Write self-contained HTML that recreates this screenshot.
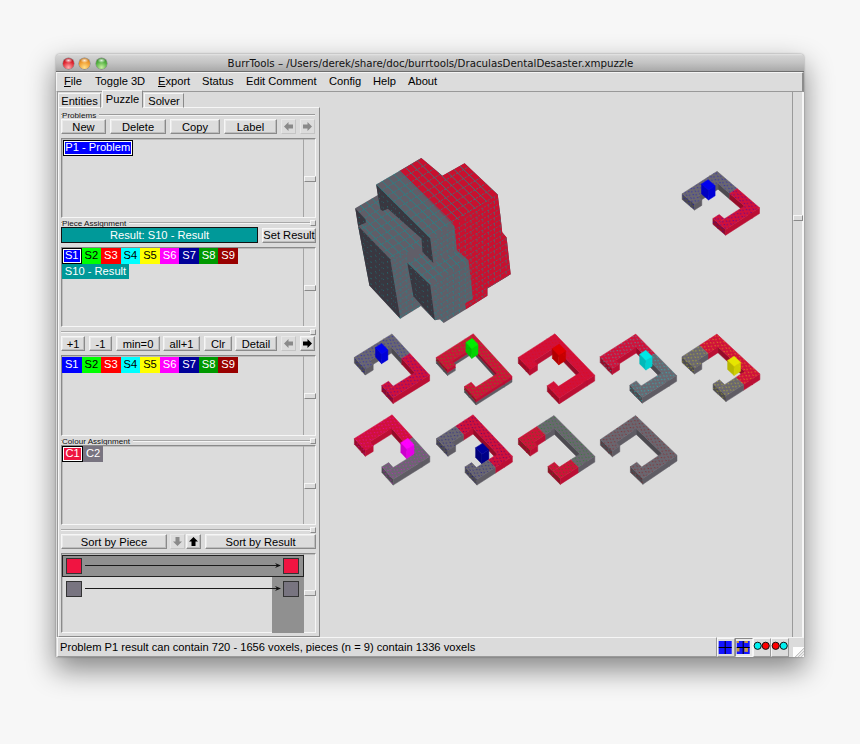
<!DOCTYPE html><html><head><meta charset="utf-8"><title>BurrTools</title><style>
html,body{margin:0;padding:0}
body{width:860px;height:744px;overflow:hidden;background:#f7f7f7;position:relative;font-family:"Liberation Sans",sans-serif;font-size:11.15px;color:#000}
.abs,#win *{position:absolute;box-sizing:border-box}
#win{position:absolute;left:56px;top:54px;width:748px;height:603px;background:#dbdbdb;border-radius:4px 4px 0 0;box-shadow:0 12px 28px 1px rgba(0,0,0,.45),0 0 2px rgba(0,0,0,.4)}
#title{left:0;top:0;width:748px;padding-left:1px;height:18px;border-radius:4px 4px 0 0;background:linear-gradient(#e6e6e6 0,#dadada 1px,#d2d2d2 2px,#c4c4c4 50%,#a9a9a9);border-bottom:1px solid #6e6e6e;font-family:"DejaVu Sans","Liberation Sans",sans-serif;font-size:10.25px;text-align:center;line-height:18px;color:#111;white-space:nowrap}
.tl{width:11px;height:11px;border-radius:50%;top:4px}
#menu{left:0;top:18px;width:748px;height:20px;background:#dcdcdc;border-top:1px solid #f4f4f4;border-left:1px solid #f4f4f4;border-bottom:1px solid #999;border-right:2px solid #8c8c8c}
#menu span{top:0;line-height:17px;white-space:nowrap}
#win u{position:static}
.t{white-space:nowrap;line-height:15px;text-align:center}
.btn{background:#dcdcdc;border:1px solid;border-color:#f6f6f6 #8a8a8a #8a8a8a #f6f6f6;box-shadow:inset -1px -1px 0 #bdbdbd,inset 1px 1px 0 #e9e9e9;text-align:center;white-space:nowrap;line-height:14px;height:15px}
.down{background:#dcdcdc;border:1px solid;border-color:#8a8a8a #f6f6f6 #f6f6f6 #8a8a8a;box-shadow:inset 1px 1px 0 #bdbdbd}
.lbl{font-size:8.1px;line-height:9px;white-space:nowrap;background:#dbdbdb;padding-right:3px;color:#111}
.it{height:15.5px;line-height:15.5px;text-align:center;white-space:nowrap}
.sep{height:2px;border-top:1px solid #a9a9a9;border-bottom:1px solid #f4f4f4}
.hd{width:6px;height:6px;background:#dcdcdc;border:1px solid;border-color:#f6f6f6 #8a8a8a #8a8a8a #f6f6f6}
.thumb{left:247px;width:12px;height:6px;background:#dcdcdc;border:1px solid;border-color:#f6f6f6 #8a8a8a #8a8a8a #f6f6f6}
.sq{width:16px;height:16px;border:1px solid #333}
</style></head><body><div id="win">
<div id="title">BurrTools – /Users/derek/share/doc/burrtools/DraculasDentalDesaster.xmpuzzle</div>
<div class="tl" style="left:6.8px;background:radial-gradient(ellipse 4px 2.5px at 50% 22%,rgba(255,255,255,.85),rgba(255,255,255,0) 100%),radial-gradient(circle at 50% 85%,#ffb0b0 0%,#e0232e 55%,#8e1219 100%);box-shadow:0 0 0 0.5px rgba(60,60,60,.5)"></div>
<div class="tl" style="left:23.2px;background:radial-gradient(ellipse 4px 2.5px at 50% 22%,rgba(255,255,255,.85),rgba(255,255,255,0) 100%),radial-gradient(circle at 50% 85%,#ffe08a 0%,#f09a2c 55%,#a0621a 100%);box-shadow:0 0 0 0.5px rgba(60,60,60,.5)"></div>
<div class="tl" style="left:39.6px;background:radial-gradient(ellipse 4px 2.5px at 50% 22%,rgba(255,255,255,.85),rgba(255,255,255,0) 100%),radial-gradient(circle at 50% 85%,#c8f0a0 0%,#52b040 55%,#2f6e26 100%);box-shadow:0 0 0 0.5px rgba(60,60,60,.5)"></div>
<div id="menu">
<span style="left:7px"><u>F</u>ile</span>
<span style="left:38px">Toggle 3D</span>
<span style="left:101px"><u>E</u>xport</span>
<span style="left:145px">Status</span>
<span style="left:189px">Edit Comment</span>
<span style="left:272px">Config</span>
<span style="left:316px">Help</span>
<span style="left:351px">About</span>
</div>
<div class="abs" style="left:1px;top:38px;width:2px;height:545px;background:#9a9a9a;width:1px"></div>
<div class="abs" style="left:2px;top:53px;width:262px;height:530px;border:1px solid;border-color:#f6f6f6 #8a8a8a #8a8a8a #f6f6f6"></div>
<div class="abs t" style="left:2px;top:39px;width:43px;height:15px;border:1px solid;border-color:#f6f6f6 #8a8a8a transparent #f6f6f6;line-height:14px">Entities</div>
<div class="abs t" style="left:46px;top:36px;width:41px;height:18px;border:1px solid;border-color:#f6f6f6 #8a8a8a #dbdbdb #f6f6f6;line-height:17px;background:#dbdbdb">Puzzle</div>
<div class="abs t" style="left:88px;top:39px;width:40px;height:15px;border:1px solid;border-color:#f6f6f6 #8a8a8a transparent #f6f6f6;line-height:14px">Solver</div>
<div class="abs" style="left:5px;top:60px;width:254px;height:2px;border-top:1px solid #9a9a9a;border-bottom:1px solid #f4f4f4"></div>
<div class="abs lbl" style="left:6px;top:57px">Problems</div>
<div class="btn" style="left:5px;top:65px;width:45px;">New</div>
<div class="btn" style="left:54px;top:65px;width:56px;">Delete</div>
<div class="btn" style="left:114px;top:65px;width:50px;">Copy</div>
<div class="btn" style="left:168px;top:65px;width:53px;">Label</div>
<div class="btn" style="left:225px;top:65px;width:15px;border-color:#e8e8e8 #c4c4c4 #c4c4c4 #e8e8e8;box-shadow:none"><svg width="11" height="11" viewBox="0 0 11 11" style="position:absolute;left:1px;top:1px"><path d="M1 5.5 L5.5 1 V3.5 H10 V7.5 H5.5 V10 Z" fill="#8a8a8a"/></svg></div>
<div class="btn" style="left:244px;top:65px;width:15px;border-color:#e8e8e8 #c4c4c4 #c4c4c4 #e8e8e8;box-shadow:none"><svg width="11" height="11" viewBox="0 0 11 11" style="position:absolute;left:1px;top:1px"><path d="M10 5.5 L5.5 1 V3.5 H1 V7.5 H5.5 V10 Z" fill="#8a8a8a"/></svg></div>
<div class="down" style="left:5px;top:84px;width:255px;height:80px">
<div class="abs" style="left:241px;top:0;width:1px;height:78px;background:#a4a4a4"></div>
<div class="thumb" style="left:242px;top:37px;width:12px"></div>
<div class="it" style="left:0.5px;top:1.2px;width:70.5px;background:#0000ff;color:#fff;border:1px solid #000;box-shadow:inset 0 0 0 1px #fff;line-height:13.5px">P1 - Problem</div>
</div>
<div class="sep" style="left:5px;top:168px;width:254px"></div>
<div class="hd" style="left:254px;top:166px"></div>
<div class="abs lbl" style="left:6px;top:165px">Piece Assignment</div>
<div class="abs t" style="left:5px;top:173px;width:197px;height:16px;background:#009999;border:1px solid #111;color:#fff;line-height:14px">Result: S10 - Result</div>
<div class="btn" style="left:206px;top:174px;width:54px;line-height:13px">Set Result</div>
<div class="down" style="left:5px;top:193px;width:255px;height:80px">
<div class="abs" style="left:241px;top:0;width:1px;height:78px;background:#a4a4a4"></div>
<div class="thumb" style="left:242px;top:37px;width:12px"></div>
<div class="it" style="left:0px;top:0.4px;width:19.5px;background:#0000ff;color:#fff;border:1px solid #000;box-shadow:inset 0 0 0 1px #fff;line-height:13.5px">S1</div><div class="it" style="left:19.5px;top:0.4px;width:19.6px;background:#00ff00;color:#000">S2</div><div class="it" style="left:39.1px;top:0.4px;width:19.5px;background:#ff0000;color:#fff">S3</div><div class="it" style="left:58.6px;top:0.4px;width:19.6px;background:#00ffff;color:#000">S4</div><div class="it" style="left:78.2px;top:0.4px;width:19.6px;background:#ffff00;color:#000">S5</div><div class="it" style="left:97.80000000000001px;top:0.4px;width:19.5px;background:#ff00ff;color:#fff">S6</div><div class="it" style="left:117.30000000000001px;top:0.4px;width:19.6px;background:#000099;color:#fff">S7</div><div class="it" style="left:136.9px;top:0.4px;width:19.5px;background:#009900;color:#fff">S8</div><div class="it" style="left:156.4px;top:0.4px;width:19.6px;background:#990000;color:#fff">S9</div><div class="it" style="left:0px;top:15.9px;width:67px;background:#009999;color:#fff">S10 - Result</div>
</div>
<div class="sep" style="left:5px;top:277px;width:254px"></div>
<div class="hd" style="left:254px;top:275px"></div>
<div class="btn" style="left:5px;top:282px;width:24px;">+1</div>
<div class="btn" style="left:33px;top:282px;width:23px;">-1</div>
<div class="btn" style="left:60px;top:282px;width:44px;">min=0</div>
<div class="btn" style="left:107px;top:282px;width:37px;">all+1</div>
<div class="btn" style="left:148px;top:282px;width:28px;">Clr</div>
<div class="btn" style="left:179px;top:282px;width:42px;">Detail</div>
<div class="btn" style="left:225px;top:282px;width:15px;border-color:#e8e8e8 #c4c4c4 #c4c4c4 #e8e8e8;box-shadow:none"><svg width="11" height="11" viewBox="0 0 11 11" style="position:absolute;left:1px;top:1px"><path d="M1 5.5 L5.5 1 V3.5 H10 V7.5 H5.5 V10 Z" fill="#8a8a8a"/></svg></div>
<div class="btn" style="left:244px;top:282px;width:15px;"><svg width="11" height="11" viewBox="0 0 11 11" style="position:absolute;left:1px;top:1px"><path d="M10 5.5 L5.5 1 V3.5 H1 V7.5 H5.5 V10 Z" fill="#000"/></svg></div>
<div class="down" style="left:5px;top:301px;width:255px;height:81px">
<div class="abs" style="left:241px;top:0;width:1px;height:79px;background:#a4a4a4"></div>
<div class="thumb" style="left:242px;top:37px;width:12px"></div>
<div class="it" style="left:0px;top:1px;width:19.5px;background:#0000ff;color:#fff">S1</div><div class="it" style="left:19.5px;top:1px;width:19.6px;background:#00ff00;color:#000">S2</div><div class="it" style="left:39.1px;top:1px;width:19.5px;background:#ff0000;color:#fff">S3</div><div class="it" style="left:58.6px;top:1px;width:19.6px;background:#00ffff;color:#000">S4</div><div class="it" style="left:78.2px;top:1px;width:19.6px;background:#ffff00;color:#000">S5</div><div class="it" style="left:97.80000000000001px;top:1px;width:19.5px;background:#ff00ff;color:#fff">S6</div><div class="it" style="left:117.30000000000001px;top:1px;width:19.6px;background:#000099;color:#fff">S7</div><div class="it" style="left:136.9px;top:1px;width:19.5px;background:#009900;color:#fff">S8</div><div class="it" style="left:156.4px;top:1px;width:19.6px;background:#990000;color:#fff">S9</div>
</div>
<div class="sep" style="left:5px;top:386px;width:254px"></div>
<div class="hd" style="left:254px;top:384px"></div>
<div class="abs lbl" style="left:6px;top:383px">Colour Assignment</div>
<div class="down" style="left:5px;top:391px;width:255px;height:80px">
<div class="abs" style="left:241px;top:0;width:1px;height:78px;background:#a4a4a4"></div>
<div class="thumb" style="left:242px;top:37px;width:12px"></div>
<div class="it" style="left:0px;top:0.3px;width:21px;background:#ee1540;color:#fff;border:1px solid #000;box-shadow:inset 0 0 0 1px #fff;line-height:13.5px">C1</div><div class="it" style="left:21px;top:0.3px;width:20px;background:#787480;color:#fff">C2</div>
</div>
<div class="sep" style="left:5px;top:475px;width:254px"></div>
<div class="hd" style="left:254px;top:473px"></div>
<div class="btn" style="left:5px;top:479.6px;width:106px;">Sort by Piece</div>
<div class="btn" style="left:114px;top:479.6px;width:15px;border-color:#e8e8e8 #c4c4c4 #c4c4c4 #e8e8e8;box-shadow:none"><svg width="11" height="11" viewBox="0 0 11 11" style="position:absolute;left:1px;top:1px"><path d="M5.5 10 L1 5.5 H3.5 V1 H7.5 V5.5 H10 Z" fill="#8a8a8a"/></svg></div>
<div class="btn" style="left:130px;top:479.6px;width:15px;"><svg width="11" height="11" viewBox="0 0 11 11" style="position:absolute;left:1px;top:1px"><path d="M5.5 1 L1 5.5 H3.5 V10 H7.5 V5.5 H10 Z" fill="#000"/></svg></div>
<div class="btn" style="left:149px;top:479.6px;width:111px;">Sort by Result</div>
<div class="down" style="left:5px;top:499px;width:255px;height:80px">
<div class="abs" style="left:241px;top:0;width:1px;height:78px;background:#a4a4a4"></div>
<div class="thumb" style="left:242px;top:36px;width:12px"></div>
<div class="abs" style="left:0px;top:0.6px;width:241.5px;height:22px;background:#909090;border:1px solid #222"></div><div class="abs" style="left:210px;top:23px;width:32px;height:56px;background:#909090"></div><div class="sq" style="left:4.2px;top:3.7px;background:#f01441"></div><div class="sq" style="left:221.3px;top:3.7px;background:#f01441"></div><div class="sq" style="left:4.2px;top:26.5px;background:#787480"></div><div class="sq" style="left:221.3px;top:26.5px;background:#787480"></div><svg class="abs" style="left:23px;top:7px" width="198" height="9" viewBox="0 0 198 9"><path d="M0 4.5 H195" stroke="#1a1a1a" stroke-width="1" fill="none"/><path d="M190 2 L196 4.5 L190 7 L192 4.5 Z" fill="#111"/></svg><svg class="abs" style="left:23px;top:30px" width="198" height="9" viewBox="0 0 198 9"><path d="M0 4.5 H195" stroke="#1a1a1a" stroke-width="1" fill="none"/><path d="M190 2 L196 4.5 L190 7 L192 4.5 Z" fill="#111"/></svg>
</div>
<div class="abs" style="left:0;top:583px;width:748px;height:20px;border-top:1px solid #f4f4f4;background:#dbdbdb"></div>
<div class="abs" style="left:1px;top:583px;width:660px;height:20px;border:1px solid;border-color:#f6f6f6 #9a9a9a #9a9a9a #f6f6f6;line-height:18px;padding-left:2px;white-space:nowrap">Problem P1 result can contain 720 - 1656 voxels, pieces (n = 9) contain 1336 voxels</div>
<div class="abs" style="left:661px;top:584px;width:18px;height:19px;border:1px solid;border-color:#f6f6f6 #9a9a9a #9a9a9a #f6f6f6;background:#dbdbdb"><svg class="abs" style="left:0px;top:2px" width="15" height="13" viewBox="-0.7 0 15 13"><rect width="13" height="13" fill="#1414ff"/><path d="M6.5 0V13M0 6.5H13" stroke="#000" stroke-width="1"/></svg></div>
<div class="abs" style="left:679px;top:584px;width:18px;height:19px;border:1px solid;border-color:#8a8a8a #f6f6f6 #f6f6f6 #8a8a8a;background:#e8e8e8"><svg class="abs" style="left:0px;top:2px" width="15" height="13" viewBox="-0.7 0 15 13"><rect width="13" height="13" fill="#1414ff"/><rect x="0" y="0" width="2.2" height="2" fill="#c99a3a"/><rect x="0" y="7" width="2.8" height="3.5" fill="#c99a3a"/><rect x="7.7" y="0" width="3.5" height="2" fill="#c99a3a"/><rect x="7.7" y="7" width="3.5" height="3.9" fill="#c99a3a"/><path d="M6.5 0V13M0 6.5H13" stroke="#000" stroke-width="1"/></svg></div>
<div class="abs" style="left:697px;top:584px;width:18px;height:19px;border:1px solid;border-color:#f6f6f6 #9a9a9a #9a9a9a #f6f6f6;background:#dbdbdb"><svg class="abs" style="left:-1px;top:2px" width="17" height="10" viewBox="-0.2 0.2 17 10"><circle cx="4.5" cy="5" r="3.6" fill="#00f0f0" stroke="#111" stroke-width="1"/><circle cx="12.5" cy="5" r="3.6" fill="#ff0000" stroke="#111" stroke-width="1"/></svg></div>
<div class="abs" style="left:715px;top:584px;width:18px;height:19px;border:1px solid;border-color:#f6f6f6 #9a9a9a #9a9a9a #f6f6f6;background:#dbdbdb"><svg class="abs" style="left:-1px;top:2px" width="17" height="10" viewBox="-0.2 0.2 17 10"><circle cx="4.5" cy="5" r="3.6" fill="#ff0000" stroke="#111" stroke-width="1"/><circle cx="12.5" cy="5" r="3.6" fill="#00f0f0" stroke="#111" stroke-width="1"/></svg></div>
<div class="abs" style="left:737px;top:593px;width:11px;height:10px;background:linear-gradient(135deg,#fdfdfd 55%,#bbb 56%,#fdfdfd 66%,#bbb 70%,#fdfdfd 80%,#bbb 84%,#fdfdfd 92%)"></div>
<div class="abs" style="left:264px;top:38px;width:472px;height:545px"></div>
<div class="abs" style="left:736px;top:38px;width:12px;height:545px;border-left:1px solid #9a9a9a;border-right:2px solid #f6f6f6"></div>
<div class="abs" style="left:737px;top:161px;width:10px;height:6px;border:1px solid;border-color:#f6f6f6 #8a8a8a #8a8a8a #f6f6f6"></div>
<svg class="abs" style="left:0;top:0" width="749" height="603" viewBox="56 54 749 603"><defs><clipPath id="ct"><polygon points="376.2,184.4 399.4,171.0 421.3,158.0 442.4,175.7 464.6,163.3 497.7,194.6 430.2,238.5"/><polygon points="355.2,208.2 377.8,194.9 380.4,209.5 382.8,211.1 387.9,208.7 421.5,238.5 422.3,246.0 407.5,252.0 390.3,259.2 358.1,226.0 365.7,222.7 365.7,219.5"/><polygon points="407.3,263.1 422.5,252.1 433.3,262.9 456.9,250.2 468.5,260.3 430.2,285.0"/></clipPath><clipPath id="cr"><polygon points="390.3,259.2 407.5,252.0 407.3,263.1 413.4,296.3 420.9,306.0 400.3,318.8"/><polygon points="430.2,285.0 468.5,260.3 472.9,299.0 465.2,303.2 465.6,309.4 443.7,323.0 440.0,319.4 434.9,320.3"/><polygon points="430.2,238.5 454.5,226.0 454.9,230.0 456.9,250.2 433.3,262.9"/><polygon points="454.5,226.0 497.7,194.6 500.6,217.2 502.2,232.3 506.6,237.6 510.7,274.2 487.4,288.4 487.4,295.7 465.6,309.4 465.2,303.2 472.9,299.0 468.5,260.3 456.9,250.2 454.9,230.0"/></clipPath><clipPath id="cl"><polygon points="376.2,184.4 430.2,238.5 431.9,252.0 433.3,262.9 422.5,252.1 421.5,238.5 387.9,208.7 382.8,211.1 380.4,209.5 377.8,194.9"/><polygon points="355.2,208.2 365.7,219.5 365.7,222.7 358.1,226.0 355.9,212.0"/><polygon points="358.1,226.0 390.3,259.2 400.3,318.8 369.4,285.5"/><polygon points="407.3,263.1 430.2,285.0 434.9,320.3 413.4,296.3"/></clipPath><pattern id="ds1" width="5.3" height="4.1" patternUnits="userSpaceOnUse" patternTransform="rotate(33)"><rect x="0.5" y="0.6" width="0.8" height="1.5" fill="#0000e6"/><rect x="3" y="2.6" width="1.5" height="0.8" fill="#0000e6"/></pattern><pattern id="ds2" width="5.3" height="4.1" patternUnits="userSpaceOnUse" patternTransform="rotate(33)"><rect x="0.5" y="0.6" width="0.8" height="1.5" fill="#00e000"/><rect x="3" y="2.6" width="1.5" height="0.8" fill="#00e000"/></pattern><pattern id="ds3" width="5.3" height="4.1" patternUnits="userSpaceOnUse" patternTransform="rotate(33)"><rect x="0.5" y="0.6" width="0.8" height="1.5" fill="#ee0000"/><rect x="3" y="2.6" width="1.5" height="0.8" fill="#ee0000"/></pattern><pattern id="ds4" width="5.3" height="4.1" patternUnits="userSpaceOnUse" patternTransform="rotate(33)"><rect x="0.5" y="0.6" width="0.8" height="1.5" fill="#00e6e6"/><rect x="3" y="2.6" width="1.5" height="0.8" fill="#00e6e6"/></pattern><pattern id="ds5" width="5.3" height="4.1" patternUnits="userSpaceOnUse" patternTransform="rotate(33)"><rect x="0.5" y="0.6" width="0.8" height="1.5" fill="#e6e600"/><rect x="3" y="2.6" width="1.5" height="0.8" fill="#e6e600"/></pattern><pattern id="ds6" width="5.3" height="4.1" patternUnits="userSpaceOnUse" patternTransform="rotate(33)"><rect x="0.5" y="0.6" width="0.8" height="1.5" fill="#f000f0"/><rect x="3" y="2.6" width="1.5" height="0.8" fill="#f000f0"/></pattern><pattern id="ds7" width="5.3" height="4.1" patternUnits="userSpaceOnUse" patternTransform="rotate(33)"><rect x="0.5" y="0.6" width="0.8" height="1.5" fill="#000099"/><rect x="3" y="2.6" width="1.5" height="0.8" fill="#000099"/></pattern><pattern id="ds8" width="5.3" height="4.1" patternUnits="userSpaceOnUse" patternTransform="rotate(33)"><rect x="0.5" y="0.6" width="0.8" height="1.5" fill="#009900"/><rect x="3" y="2.6" width="1.5" height="0.8" fill="#009900"/></pattern><pattern id="ds9" width="5.3" height="4.1" patternUnits="userSpaceOnUse" patternTransform="rotate(33)"><rect x="0.5" y="0.6" width="0.8" height="1.5" fill="#990000"/><rect x="3" y="2.6" width="1.5" height="0.8" fill="#990000"/></pattern></defs><g id="big">
<polygon points="376.2,184.4 399.4,171.0 421.3,158.0 442.4,175.7 464.6,163.3 497.7,194.6 500.6,217.2 502.2,232.3 506.6,237.6 510.7,274.2 487.4,288.4 487.4,295.7 465.6,309.4 443.7,323.0 440.0,319.4 434.9,320.3 420.9,306.0 400.3,318.8 369.4,285.5 358.1,226.0 355.9,212.0 355.2,208.2 377.8,194.9" fill="#605e68"/>
<polygon points="399.4,171.0 421.3,158.0 442.4,175.7 464.6,163.3 497.7,194.6 500.6,217.2 502.2,232.3 506.6,237.6 510.7,274.2 487.4,288.4 487.4,295.7 465.6,309.4 465.2,303.2 472.9,299.0 470.9,280.0 468.5,260.3 456.9,250.2 454.9,230.0 454.5,226.0" fill="#c9102f"/>
<polygon points="376.2,184.4 430.2,238.5 431.9,252.0 433.3,262.9 422.5,252.1 421.5,238.5 387.9,208.7 382.8,211.1 380.4,209.5 377.8,194.9" fill="#393740"/>
<polygon points="355.2,208.2 365.7,219.5 365.7,222.7 358.1,226.0 355.9,212.0" fill="#393740"/>
<polygon points="358.1,226.0 390.3,259.2 400.3,318.8 369.4,285.5" fill="#393740"/>
<polygon points="407.3,263.1 430.2,285.0 434.9,320.3 413.4,296.3" fill="#393740"/>
<g clip-path="url(#ct)" stroke="#149092" fill="none">
<path d="M149.1 71.0L462.9 379.4M154.9 67.6L468.8 376.0M160.8 64.2L474.6 372.6M166.6 60.8L480.5 369.2M172.5 57.4L486.3 365.8M178.3 54.0L492.2 362.4M184.2 50.6L498.0 359.0M190.0 47.2L503.9 355.6M195.9 43.8L509.7 352.2M201.7 40.4L515.6 348.8M207.6 37.0L521.4 345.4M213.4 33.6L527.3 342.0M219.3 30.2L533.1 338.6M225.1 26.8L539.0 335.2M231.0 23.4L544.8 331.8M236.8 20.0L550.7 328.4M242.7 16.6L556.5 325.0M248.5 13.2L562.4 321.6M254.4 9.8L568.2 318.2M260.2 6.4L574.1 314.8M266.1 3.0L579.9 311.4M271.9 -0.4L585.8 308.0M277.8 -3.8L591.6 304.6M283.6 -7.2L597.5 301.2M289.5 -10.6L603.3 297.8M295.3 -14.0L609.2 294.4M301.2 -17.4L615.0 291.0M307.0 -20.8L620.9 287.6M312.9 -24.2L626.7 284.2M318.7 -27.6L632.6 280.8M324.6 -31.0L638.4 277.4M330.4 -34.4L644.3 274.0M336.3 -37.8L650.1 270.6M342.1 -41.2L656.0 267.2M348.0 -44.6L661.8 263.8" stroke-width="0.9" opacity="0.8"/>
<path d="M140.0 249.7L520.4 28.7M145.7 255.4L526.2 34.3M151.5 261.0L531.9 40.0M157.2 266.7L537.7 45.6M163.0 272.3L543.4 51.3M168.7 278.0L549.2 56.9M174.5 283.6L554.9 62.6M180.2 289.3L560.7 68.2M186.0 294.9L566.4 73.9M191.7 300.6L572.2 79.5M197.5 306.2L577.9 85.2M203.2 311.9L583.7 90.8M209.0 317.5L589.4 96.5M214.7 323.2L595.2 102.1M220.5 328.8L600.9 107.8M226.2 334.5L606.7 113.4M232.0 340.1L612.4 119.1M237.7 345.8L618.2 124.7M243.5 351.4L623.9 130.4M249.2 357.1L629.7 136.0M255.0 362.7L635.4 141.7M260.7 368.4L641.2 147.3M266.5 374.0L646.9 153.0M272.2 379.7L652.7 158.6M278.0 385.3L658.4 164.3M283.7 391.0L664.2 169.9M289.5 396.6L669.9 175.6M295.2 402.3L675.7 181.2M301.0 407.9L681.4 186.9M306.7 413.6L687.2 192.5M312.5 419.2L692.9 198.2M318.2 424.9L698.7 203.8M324.0 430.5L704.4 209.5" stroke-width="0.9" opacity="0.75" stroke-dasharray="2.2 1.2"/>
</g>
<g clip-path="url(#cr)" stroke="#149092" fill="none">
<path d="M240.0 283.0L620.4 62.0M240.0 288.5L620.4 67.5M240.0 294.0L620.4 73.0M240.0 299.5L620.4 78.5M240.0 305.0L620.4 84.0M240.0 310.5L620.4 89.5M240.0 316.0L620.4 95.0M240.0 321.5L620.4 100.5M240.0 327.0L620.4 106.0M240.0 332.5L620.4 111.5M240.0 338.0L620.4 117.0M240.0 343.5L620.4 122.5M240.0 349.0L620.4 128.0M240.0 354.5L620.4 133.5M240.0 360.0L620.4 139.0M240.0 365.5L620.4 144.5M240.0 371.0L620.4 150.0M240.0 376.5L620.4 155.5M240.0 382.0L620.4 161.0M240.0 387.5L620.4 166.5M240.0 393.0L620.4 172.0M240.0 398.5L620.4 177.5M240.0 404.0L620.4 183.0M240.0 409.5L620.4 188.5M240.0 415.0L620.4 194.0M240.0 420.5L620.4 199.5M240.0 426.0L620.4 205.0M240.0 431.5L620.4 210.5M240.0 437.0L620.4 216.0M240.0 442.5L620.4 221.5M240.0 448.0L620.4 227.0" stroke-width="0.9" opacity="0.55" stroke-dasharray="2.2 1.2"/>
<path d="M383.4 45.7L383.4 485.7M389.2 42.3L389.2 482.3M395.1 38.9L395.1 478.9M400.9 35.5L400.9 475.5M406.8 32.1L406.8 472.1M412.6 28.7L412.6 468.7M418.5 25.3L418.5 465.3M424.3 21.9L424.3 461.9M430.2 18.5L430.2 458.5M436.1 15.1L436.1 455.1M441.9 11.7L441.9 451.7M447.8 8.3L447.8 448.3M453.6 4.9L453.6 444.9M459.4 1.5L459.4 441.5M465.3 -1.9L465.3 438.1M471.1 -5.3L471.1 434.7M477.0 -8.7L477.0 431.3M482.8 -12.1L482.8 427.9M488.7 -15.5L488.7 424.5M494.5 -18.9L494.5 421.1M500.4 -22.3L500.4 417.7M506.2 -25.7L506.2 414.3M512.1 -29.1L512.1 410.9M518.0 -32.5L518.0 407.5M523.8 -35.9L523.8 404.1" stroke-width="0.9" opacity="0.5" stroke-dasharray="3 2.5"/>
</g>
<g clip-path="url(#cl)" stroke="#149092" fill="none">
<path d="M219.3 -46.8L533.1 261.6M219.3 -41.3L533.1 267.1M219.3 -35.8L533.1 272.6M219.3 -30.3L533.1 278.1M219.3 -24.8L533.1 283.6M219.3 -19.3L533.1 289.1M219.3 -13.8L533.1 294.6M219.3 -8.3L533.1 300.1M219.3 -2.8L533.1 305.6M219.3 2.7L533.1 311.1M219.3 8.2L533.1 316.6M219.3 13.7L533.1 322.1M219.3 19.2L533.1 327.6M219.3 24.7L533.1 333.1M219.3 30.2L533.1 338.6M219.3 35.7L533.1 344.1M219.3 41.2L533.1 349.6M219.3 46.7L533.1 355.1M219.3 52.2L533.1 360.6M219.3 57.7L533.1 366.1M219.3 63.2L533.1 371.6M219.3 68.7L533.1 377.1M219.3 74.2L533.1 382.6M219.3 79.7L533.1 388.1M219.3 85.2L533.1 393.6M219.3 90.7L533.1 399.1M219.3 96.2L533.1 404.6M219.3 101.7L533.1 410.1M219.3 107.2L533.1 415.6M219.3 112.7L533.1 421.1M219.3 118.2L533.1 426.6M219.3 123.7L533.1 432.1M219.3 129.2L533.1 437.6M219.3 134.7L533.1 443.1M219.3 140.2L533.1 448.6M219.3 145.7L533.1 454.1M219.3 151.2L533.1 459.6M219.3 156.7L533.1 465.1M219.3 162.2L533.1 470.6M219.3 167.7L533.1 476.1M219.3 173.2L533.1 481.6M219.3 178.7L533.1 487.1M219.3 184.2L533.1 492.6M219.3 189.7L533.1 498.1M219.3 195.2L533.1 503.6" stroke-width="1" opacity="0.55" stroke-dasharray="1.2 4.4"/>
<path d="M341.7 -69.5L341.7 370.5M347.4 -63.8L347.4 376.1M353.2 -58.2L353.2 381.8M358.9 -52.6L358.9 387.4M364.7 -46.9L364.7 393.1M370.4 -41.2L370.4 398.8M376.2 -35.6L376.2 404.4M381.9 -29.9L381.9 410.1M387.7 -24.3L387.7 415.7M393.4 -18.6L393.4 421.4M399.2 -13.0L399.2 427.0M404.9 -7.3L404.9 432.6M410.7 -1.7L410.7 438.3M416.4 4.0L416.4 444.0M422.2 9.6L422.2 449.6M427.9 15.2L427.9 455.2M433.7 20.9L433.7 460.9M439.4 26.6L439.4 466.6M445.2 32.2L445.2 472.2M450.9 37.9L450.9 477.9M456.7 43.5L456.7 483.5M462.4 49.1L462.4 489.1M468.2 54.8L468.2 494.8" stroke-width="1" opacity="0.35" stroke-dasharray="1.2 4.3"/>
</g>
</g>
<g id="pieces" stroke-width="0.5" stroke-linejoin="round">
<polygon points="383.9,338.9 401.8,358.5 401.8,364.3 383.9,344.7" fill="#4c4a50" stroke="#4c4a50"/>
<polygon points="392.0,333.9 409.9,353.5 401.8,358.5 383.9,338.9" fill="#6a6770" stroke="#6a6770"/>
<polygon points="401.8,358.5 421.5,380.1 421.5,385.9 401.8,364.3" fill="#950c29" stroke="#950c29"/>
<polygon points="429.6,375.1 421.5,380.1 421.5,385.9 429.6,380.9" fill="#bb0f34" stroke="#bb0f34"/>
<polygon points="409.9,353.5 429.6,375.1 421.5,380.1 401.8,358.5" fill="#d0113a" stroke="#d0113a"/>
<polygon points="354.4,357.3 361.9,365.5 361.9,371.3 354.4,363.1" fill="#4c4a50" stroke="#4c4a50"/>
<polygon points="391.4,347.2 361.9,365.5 361.9,371.3 391.4,353.0" fill="#5f5c64" stroke="#5f5c64"/>
<polygon points="383.9,338.9 391.4,347.2 361.9,365.5 354.4,357.3" fill="#6a6770" stroke="#6a6770"/>
<polygon points="361.9,365.5 365.3,369.2 365.3,375.0 361.9,371.3" fill="#4c4a50" stroke="#4c4a50"/>
<polygon points="373.2,364.3 365.3,369.2 365.3,375.0 373.2,370.1" fill="#5f5c64" stroke="#5f5c64"/>
<polygon points="369.8,360.6 373.2,364.3 365.3,369.2 361.9,365.5" fill="#6a6770" stroke="#6a6770"/>
<polygon points="375.5,347.4 381.5,354.0 381.5,363.7 375.5,357.1" fill="#0000c0" stroke="#0000c0"/>
<polygon points="387.9,350.0 381.5,354.0 381.5,363.7 387.9,359.7" fill="#0000d8" stroke="#0000d8"/>
<polygon points="381.8,343.4 387.9,350.0 381.5,354.0 375.5,347.4" fill="#0000f0" stroke="#0000f0"/>
<polygon points="381.8,385.4 386.4,390.4 386.4,396.2 381.8,391.2" fill="#950c29" stroke="#950c29"/>
<polygon points="388.6,381.2 393.1,386.2 386.4,390.4 381.8,385.4" fill="#d0113a" stroke="#d0113a"/>
<polygon points="386.4,390.4 393.1,397.8 393.1,403.6 386.4,396.2" fill="#950c29" stroke="#950c29"/>
<polygon points="421.5,380.1 393.1,397.8 393.1,403.6 421.5,385.9" fill="#bb0f34" stroke="#bb0f34"/>
<polygon points="414.7,372.7 421.5,380.1 393.1,397.8 386.4,390.4" fill="#d0113a" stroke="#d0113a"/>
<polygon points="354.4,357.3 392.0,333.9 429.6,375.1 393.1,397.8 393.1,403.6 381.8,391.2 381.8,385.4 388.6,381.2 393.1,386.2 414.7,372.7 391.4,347.2 369.8,360.6 373.2,364.3 365.3,369.2 365.3,375.0 354.4,363.1" fill="url(#ds1)" opacity="0.6" stroke="none"/>
<polygon points="465.3,341.8 504.0,384.3 504.0,387.2 465.3,344.7" fill="#4c4a50" stroke="#4c4a50"/>
<polygon points="512.0,379.2 504.0,384.3 504.0,387.2 512.0,382.1" fill="#5f5c64" stroke="#5f5c64"/>
<polygon points="473.3,336.7 512.0,379.2 504.0,384.3 465.3,341.8" fill="#6a6770" stroke="#6a6770"/>
<polygon points="436.3,360.3 444.0,368.8 444.0,371.7 436.3,363.2" fill="#4c4a50" stroke="#4c4a50"/>
<polygon points="473.1,350.3 444.0,368.8 444.0,371.7 473.1,353.2" fill="#5f5c64" stroke="#5f5c64"/>
<polygon points="465.3,341.8 473.1,350.3 444.0,368.8 436.3,360.3" fill="#6a6770" stroke="#6a6770"/>
<polygon points="444.0,368.8 447.5,372.6 447.5,375.5 444.0,371.7" fill="#4c4a50" stroke="#4c4a50"/>
<polygon points="455.3,367.7 447.5,372.6 447.5,375.5 455.3,370.6" fill="#5f5c64" stroke="#5f5c64"/>
<polygon points="451.8,363.8 455.3,367.7 447.5,372.6 444.0,368.8" fill="#6a6770" stroke="#6a6770"/>
<polygon points="464.5,389.3 469.1,394.4 469.1,397.3 464.5,392.2" fill="#4c4a50" stroke="#4c4a50"/>
<polygon points="471.2,385.1 475.8,390.2 469.1,394.4 464.5,389.3" fill="#6a6770" stroke="#6a6770"/>
<polygon points="469.1,394.4 476.1,402.1 476.1,405.0 469.1,397.3" fill="#4c4a50" stroke="#4c4a50"/>
<polygon points="504.0,384.3 476.1,402.1 476.1,405.0 504.0,387.2" fill="#5f5c64" stroke="#5f5c64"/>
<polygon points="497.1,376.6 504.0,384.3 476.1,402.1 469.1,394.4" fill="#6a6770" stroke="#6a6770"/>
<polygon points="465.3,338.9 504.0,381.4 504.0,384.3 465.3,341.8" fill="#950c29" stroke="#950c29"/>
<polygon points="512.0,376.3 504.0,381.4 504.0,384.3 512.0,379.2" fill="#bb0f34" stroke="#bb0f34"/>
<polygon points="473.3,333.8 512.0,376.3 504.0,381.4 465.3,338.9" fill="#d0113a" stroke="#d0113a"/>
<polygon points="436.3,357.4 444.0,365.9 444.0,368.8 436.3,360.3" fill="#950c29" stroke="#950c29"/>
<polygon points="473.1,347.4 444.0,365.9 444.0,368.8 473.1,350.3" fill="#bb0f34" stroke="#bb0f34"/>
<polygon points="465.3,338.9 473.1,347.4 444.0,365.9 436.3,357.4" fill="#d0113a" stroke="#d0113a"/>
<polygon points="444.0,365.9 447.5,369.7 447.5,372.6 444.0,368.8" fill="#950c29" stroke="#950c29"/>
<polygon points="455.3,364.8 447.5,369.7 447.5,372.6 455.3,367.7" fill="#bb0f34" stroke="#bb0f34"/>
<polygon points="451.8,360.9 455.3,364.8 447.5,369.7 444.0,365.9" fill="#d0113a" stroke="#d0113a"/>
<polygon points="465.9,342.3 471.7,348.7 471.7,358.4 465.9,352.0" fill="#00be00" stroke="#00be00"/>
<polygon points="478.0,344.6 471.7,348.7 471.7,358.4 478.0,354.3" fill="#00d600" stroke="#00d600"/>
<polygon points="472.2,338.3 478.0,344.6 471.7,348.7 465.9,342.3" fill="#00ee00" stroke="#00ee00"/>
<polygon points="464.5,386.4 469.1,391.5 469.1,394.4 464.5,389.3" fill="#950c29" stroke="#950c29"/>
<polygon points="471.2,382.2 475.8,387.3 469.1,391.5 464.5,386.4" fill="#d0113a" stroke="#d0113a"/>
<polygon points="469.1,391.5 476.1,399.2 476.1,402.1 469.1,394.4" fill="#950c29" stroke="#950c29"/>
<polygon points="504.0,381.4 476.1,399.2 476.1,402.1 504.0,384.3" fill="#bb0f34" stroke="#bb0f34"/>
<polygon points="497.1,373.7 504.0,381.4 476.1,399.2 469.1,391.5" fill="#d0113a" stroke="#d0113a"/>
<polygon points="436.3,357.4 473.3,333.8 512.0,376.3 476.1,399.2 476.1,402.1 464.5,389.3 464.5,386.4 471.2,382.2 475.8,387.3 497.1,373.7 473.1,347.4 451.8,360.9 455.3,364.8 447.5,369.7 447.5,372.6 436.3,360.3" fill="url(#ds2)" opacity="0.6" stroke="none"/>
<polygon points="547.0,338.9 586.8,380.3 586.8,386.1 547.0,344.7" fill="#950c29" stroke="#950c29"/>
<polygon points="594.7,375.2 586.8,380.3 586.8,386.1 594.7,381.0" fill="#bb0f34" stroke="#bb0f34"/>
<polygon points="554.9,333.8 594.7,375.2 586.8,380.3 547.0,338.9" fill="#d0113a" stroke="#d0113a"/>
<polygon points="518.3,357.4 526.3,365.7 526.3,371.5 518.3,363.2" fill="#950c29" stroke="#950c29"/>
<polygon points="555.0,347.2 526.3,365.7 526.3,371.5 555.0,353.0" fill="#bb0f34" stroke="#bb0f34"/>
<polygon points="547.0,338.9 555.0,347.2 526.3,365.7 518.3,357.4" fill="#d0113a" stroke="#d0113a"/>
<polygon points="526.3,365.7 529.8,369.4 529.8,375.2 526.3,371.5" fill="#950c29" stroke="#950c29"/>
<polygon points="537.5,364.5 529.8,369.4 529.8,375.2 537.5,370.3" fill="#bb0f34" stroke="#bb0f34"/>
<polygon points="533.9,360.7 537.5,364.5 529.8,369.4 526.3,365.7" fill="#d0113a" stroke="#d0113a"/>
<polygon points="552.3,348.6 558.7,355.2 558.7,364.9 552.3,358.3" fill="#b00000" stroke="#b00000"/>
<polygon points="565.6,350.7 558.7,355.2 558.7,364.9 565.6,360.4" fill="#c60000" stroke="#c60000"/>
<polygon points="559.3,344.1 565.6,350.7 558.7,355.2 552.3,348.6" fill="#dd0000" stroke="#dd0000"/>
<polygon points="547.3,385.7 552.0,390.6 552.0,396.4 547.3,391.5" fill="#950c29" stroke="#950c29"/>
<polygon points="553.8,381.4 558.6,386.4 552.0,390.6 547.3,385.7" fill="#d0113a" stroke="#d0113a"/>
<polygon points="552.0,390.6 559.2,398.1 559.2,403.9 552.0,396.4" fill="#950c29" stroke="#950c29"/>
<polygon points="586.8,380.3 559.2,398.1 559.2,403.9 586.8,386.1" fill="#bb0f34" stroke="#bb0f34"/>
<polygon points="579.7,372.8 586.8,380.3 559.2,398.1 552.0,390.6" fill="#d0113a" stroke="#d0113a"/>
<polygon points="518.3,357.4 554.9,333.8 594.7,375.2 559.2,398.1 559.2,403.9 547.3,391.5 547.3,385.7 553.8,381.4 558.6,386.4 579.7,372.8 555.0,347.2 533.9,360.7 537.5,364.5 529.8,369.4 529.8,375.2 518.3,363.2" fill="url(#ds3)" opacity="0.6" stroke="none"/>
<polygon points="628.1,339.0 647.3,358.4 647.3,364.2 628.1,344.8" fill="#950c29" stroke="#950c29"/>
<polygon points="635.7,334.1 654.9,353.6 647.3,358.4 628.1,339.0" fill="#d0113a" stroke="#d0113a"/>
<polygon points="647.3,358.4 669.0,380.4 669.0,386.2 647.3,364.2" fill="#4c4a50" stroke="#4c4a50"/>
<polygon points="676.6,375.5 669.0,380.4 669.0,386.2 676.6,381.3" fill="#5f5c64" stroke="#5f5c64"/>
<polygon points="654.9,353.6 676.6,375.5 669.0,380.4 647.3,358.4" fill="#6a6770" stroke="#6a6770"/>
<polygon points="600.2,356.7 608.4,365.0 608.4,370.8 600.2,362.5" fill="#950c29" stroke="#950c29"/>
<polygon points="636.2,347.2 608.4,365.0 608.4,370.8 636.2,353.0" fill="#bb0f34" stroke="#bb0f34"/>
<polygon points="628.1,339.0 636.2,347.2 608.4,365.0 600.2,356.7" fill="#d0113a" stroke="#d0113a"/>
<polygon points="608.4,365.0 612.1,368.7 612.1,374.5 608.4,370.8" fill="#950c29" stroke="#950c29"/>
<polygon points="619.5,364.0 612.1,368.7 612.1,374.5 619.5,369.8" fill="#bb0f34" stroke="#bb0f34"/>
<polygon points="615.8,360.2 619.5,364.0 612.1,368.7 608.4,365.0" fill="#d0113a" stroke="#d0113a"/>
<polygon points="639.7,354.2 645.8,360.4 645.8,370.1 639.7,363.9" fill="#00b9b9" stroke="#00b9b9"/>
<polygon points="652.1,356.5 645.8,360.4 645.8,370.1 652.1,366.2" fill="#00d0d0" stroke="#00d0d0"/>
<polygon points="645.9,350.3 652.1,356.5 645.8,360.4 639.7,354.2" fill="#00e8e8" stroke="#00e8e8"/>
<polygon points="629.9,385.0 634.8,390.0 634.8,395.8 629.9,390.8" fill="#4c4a50" stroke="#4c4a50"/>
<polygon points="636.3,380.9 641.2,385.9 634.8,390.0 629.9,385.0" fill="#6a6770" stroke="#6a6770"/>
<polygon points="634.8,390.0 642.2,397.4 642.2,403.2 634.8,395.8" fill="#4c4a50" stroke="#4c4a50"/>
<polygon points="669.0,380.4 642.2,397.4 642.2,403.2 669.0,386.2" fill="#5f5c64" stroke="#5f5c64"/>
<polygon points="661.6,372.9 669.0,380.4 642.2,397.4 634.8,390.0" fill="#6a6770" stroke="#6a6770"/>
<polygon points="600.2,356.7 635.7,334.1 676.6,375.5 642.2,397.4 642.2,403.2 629.9,390.8 629.9,385.0 636.3,380.9 641.2,385.9 661.6,372.9 636.2,347.2 615.8,360.2 619.5,364.0 612.1,368.7 612.1,374.5 600.2,362.5" fill="url(#ds4)" opacity="0.6" stroke="none"/>
<polygon points="709.4,339.0 752.4,378.8 752.4,384.6 709.4,344.8" fill="#950c29" stroke="#950c29"/>
<polygon points="759.9,373.9 752.4,378.8 752.4,384.6 759.9,379.7" fill="#bb0f34" stroke="#bb0f34"/>
<polygon points="716.9,334.1 759.9,373.9 752.4,378.8 709.4,339.0" fill="#d0113a" stroke="#d0113a"/>
<polygon points="718.0,346.9 708.0,353.4 708.0,359.2 718.0,352.7" fill="#bb0f34" stroke="#bb0f34"/>
<polygon points="709.4,339.0 718.0,346.9 708.0,353.4 699.4,345.4" fill="#d0113a" stroke="#d0113a"/>
<polygon points="682.0,356.7 690.6,364.7 690.6,370.5 682.0,362.5" fill="#4c4a50" stroke="#4c4a50"/>
<polygon points="708.0,353.4 690.6,364.7 690.6,370.5 708.0,359.2" fill="#5f5c64" stroke="#5f5c64"/>
<polygon points="699.4,345.4 708.0,353.4 690.6,364.7 682.0,356.7" fill="#6a6770" stroke="#6a6770"/>
<polygon points="690.6,364.7 694.5,368.2 694.5,374.0 690.6,370.5" fill="#4c4a50" stroke="#4c4a50"/>
<polygon points="701.8,363.5 694.5,368.2 694.5,374.0 701.8,369.3" fill="#5f5c64" stroke="#5f5c64"/>
<polygon points="697.9,359.9 701.8,363.5 694.5,368.2 690.6,364.7" fill="#6a6770" stroke="#6a6770"/>
<polygon points="727.6,360.4 734.1,366.4 734.1,375.5 727.6,369.5" fill="#b8b800" stroke="#b8b800"/>
<polygon points="740.6,362.2 734.1,366.4 734.1,375.5 740.6,371.3" fill="#cfcf00" stroke="#cfcf00"/>
<polygon points="734.1,356.2 740.6,362.2 734.1,366.4 727.6,360.4" fill="#e6e600" stroke="#e6e600"/>
<polygon points="713.1,383.9 718.3,388.7 718.3,394.5 713.1,389.7" fill="#4c4a50" stroke="#4c4a50"/>
<polygon points="719.4,379.8 724.6,384.6 718.3,388.7 713.1,383.9" fill="#6a6770" stroke="#6a6770"/>
<polygon points="752.4,378.8 743.5,384.5 743.5,390.3 752.4,384.6" fill="#bb0f34" stroke="#bb0f34"/>
<polygon points="744.7,371.6 752.4,378.8 743.5,384.5 735.8,377.4" fill="#d0113a" stroke="#d0113a"/>
<polygon points="718.3,388.7 726.0,395.8 726.0,401.6 718.3,394.5" fill="#4c4a50" stroke="#4c4a50"/>
<polygon points="743.5,384.5 726.0,395.8 726.0,401.6 743.5,390.3" fill="#5f5c64" stroke="#5f5c64"/>
<polygon points="735.8,377.4 743.5,384.5 726.0,395.8 718.3,388.7" fill="#6a6770" stroke="#6a6770"/>
<polygon points="682.0,356.7 716.9,334.1 759.9,373.9 726.0,395.8 726.0,401.6 713.1,389.7 713.1,383.9 719.4,379.8 724.6,384.6 744.7,371.6 718.0,346.9 697.9,359.9 701.8,363.5 694.5,368.2 694.5,374.0 682.0,362.5" fill="url(#ds5)" opacity="0.6" stroke="none"/>
<polygon points="384.0,419.9 404.7,442.7 404.7,448.5 384.0,425.7" fill="#950c29" stroke="#950c29"/>
<polygon points="392.1,414.8 412.8,437.6 404.7,442.7 384.0,419.9" fill="#d0113a" stroke="#d0113a"/>
<polygon points="404.7,442.7 421.7,461.4 421.7,467.2 404.7,448.5" fill="#4c4a50" stroke="#4c4a50"/>
<polygon points="429.8,456.3 421.7,461.4 421.7,467.2 429.8,462.1" fill="#5f5c64" stroke="#5f5c64"/>
<polygon points="412.8,437.6 429.8,456.3 421.7,461.4 404.7,442.7" fill="#6a6770" stroke="#6a6770"/>
<polygon points="354.4,438.5 361.9,446.8 361.9,452.6 354.4,444.3" fill="#950c29" stroke="#950c29"/>
<polygon points="391.5,428.2 361.9,446.8 361.9,452.6 391.5,434.0" fill="#bb0f34" stroke="#bb0f34"/>
<polygon points="384.0,419.9 391.5,428.2 361.9,446.8 354.4,438.5" fill="#d0113a" stroke="#d0113a"/>
<polygon points="361.9,446.8 365.3,450.5 365.3,456.3 361.9,452.6" fill="#950c29" stroke="#950c29"/>
<polygon points="373.2,445.6 365.3,450.5 365.3,456.3 373.2,451.4" fill="#bb0f34" stroke="#bb0f34"/>
<polygon points="369.9,441.8 373.2,445.6 365.3,450.5 361.9,446.8" fill="#d0113a" stroke="#d0113a"/>
<polygon points="400.8,442.7 406.8,449.3 406.8,459.0 400.8,452.4" fill="#cc00cc" stroke="#cc00cc"/>
<polygon points="414.0,444.8 406.8,449.3 406.8,459.0 414.0,454.5" fill="#e500e5" stroke="#e500e5"/>
<polygon points="407.9,438.2 414.0,444.8 406.8,449.3 400.8,442.7" fill="#ff00ff" stroke="#ff00ff"/>
<polygon points="381.9,466.8 386.4,471.8 386.4,477.6 381.9,472.6" fill="#4c4a50" stroke="#4c4a50"/>
<polygon points="388.7,462.6 393.2,467.6 386.4,471.8 381.9,466.8" fill="#6a6770" stroke="#6a6770"/>
<polygon points="386.4,471.8 393.2,479.3 393.2,485.1 386.4,477.6" fill="#4c4a50" stroke="#4c4a50"/>
<polygon points="421.7,461.4 393.2,479.3 393.2,485.1 421.7,467.2" fill="#5f5c64" stroke="#5f5c64"/>
<polygon points="414.9,453.9 421.7,461.4 393.2,479.3 386.4,471.8" fill="#6a6770" stroke="#6a6770"/>
<polygon points="354.4,438.5 392.1,414.8 429.8,456.3 393.2,479.3 393.2,485.1 381.9,472.6 381.9,466.8 388.7,462.6 393.2,467.6 414.9,453.9 391.5,428.2 369.9,441.8 373.2,445.6 365.3,450.5 365.3,456.3 354.4,444.3" fill="url(#ds6)" opacity="0.6" stroke="none"/>
<polygon points="465.2,419.9 504.5,461.4 504.5,467.2 465.2,425.7" fill="#950c29" stroke="#950c29"/>
<polygon points="512.4,456.3 504.5,461.4 504.5,467.2 512.4,462.1" fill="#bb0f34" stroke="#bb0f34"/>
<polygon points="473.1,414.8 512.4,456.3 504.5,461.4 465.2,419.9" fill="#d0113a" stroke="#d0113a"/>
<polygon points="473.1,428.2 463.4,434.5 463.4,440.3 473.1,434.0" fill="#bb0f34" stroke="#bb0f34"/>
<polygon points="465.2,419.9 473.1,428.2 463.4,434.5 455.5,426.2" fill="#d0113a" stroke="#d0113a"/>
<polygon points="436.5,438.5 444.4,446.8 444.4,452.6 436.5,444.3" fill="#4c4a50" stroke="#4c4a50"/>
<polygon points="463.4,434.5 444.4,446.8 444.4,452.6 463.4,440.3" fill="#5f5c64" stroke="#5f5c64"/>
<polygon points="455.5,426.2 463.4,434.5 444.4,446.8 436.5,438.5" fill="#6a6770" stroke="#6a6770"/>
<polygon points="444.4,446.8 447.9,450.5 447.9,456.3 444.4,452.6" fill="#4c4a50" stroke="#4c4a50"/>
<polygon points="455.6,445.6 447.9,450.5 447.9,456.3 455.6,451.4" fill="#5f5c64" stroke="#5f5c64"/>
<polygon points="452.0,441.8 455.6,445.6 447.9,450.5 444.4,446.8" fill="#6a6770" stroke="#6a6770"/>
<polygon points="475.6,447.7 481.9,454.3 481.9,464.0 475.6,457.4" fill="#00007a" stroke="#00007a"/>
<polygon points="488.9,449.8 481.9,454.3 481.9,464.0 488.9,459.5" fill="#000089" stroke="#000089"/>
<polygon points="482.6,443.2 488.9,449.8 481.9,454.3 475.6,447.7" fill="#000099" stroke="#000099"/>
<polygon points="465.1,466.8 469.8,471.8 469.8,477.6 465.1,472.6" fill="#4c4a50" stroke="#4c4a50"/>
<polygon points="471.7,462.6 476.4,467.6 469.8,471.8 465.1,466.8" fill="#6a6770" stroke="#6a6770"/>
<polygon points="504.5,461.4 495.2,467.4 495.2,473.2 504.5,467.2" fill="#bb0f34" stroke="#bb0f34"/>
<polygon points="497.5,453.9 504.5,461.4 495.2,467.4 488.1,460.0" fill="#d0113a" stroke="#d0113a"/>
<polygon points="469.8,471.8 476.9,479.3 476.9,485.1 469.8,477.6" fill="#4c4a50" stroke="#4c4a50"/>
<polygon points="495.2,467.4 476.9,479.3 476.9,485.1 495.2,473.2" fill="#5f5c64" stroke="#5f5c64"/>
<polygon points="488.1,460.0 495.2,467.4 476.9,479.3 469.8,471.8" fill="#6a6770" stroke="#6a6770"/>
<polygon points="436.5,438.5 473.1,414.8 512.4,456.3 476.9,479.3 476.9,485.1 465.1,472.6 465.1,466.8 471.7,462.6 476.4,467.6 497.5,453.9 473.1,428.2 452.0,441.8 455.6,445.6 447.9,450.5 447.9,456.3 436.5,444.3" fill="url(#ds7)" opacity="0.6" stroke="none"/>
<polygon points="546.3,420.4 587.1,461.2 587.1,467.0 546.3,426.2" fill="#4c4a50" stroke="#4c4a50"/>
<polygon points="594.8,456.3 587.1,461.2 587.1,467.0 594.8,462.1" fill="#5f5c64" stroke="#5f5c64"/>
<polygon points="554.0,415.5 594.8,456.3 587.1,461.2 546.3,420.4" fill="#6a6770" stroke="#6a6770"/>
<polygon points="554.5,428.6 545.1,434.7 545.1,440.5 554.5,434.4" fill="#5f5c64" stroke="#5f5c64"/>
<polygon points="546.3,420.4 554.5,428.6 545.1,434.7 536.9,426.5" fill="#6a6770" stroke="#6a6770"/>
<polygon points="518.4,438.5 526.6,446.7 526.6,452.5 518.4,444.3" fill="#950c29" stroke="#950c29"/>
<polygon points="545.1,434.7 526.6,446.7 526.6,452.5 545.1,440.5" fill="#bb0f34" stroke="#bb0f34"/>
<polygon points="536.9,426.5 545.1,434.7 526.6,446.7 518.4,438.5" fill="#d0113a" stroke="#d0113a"/>
<polygon points="526.6,446.7 530.2,450.3 530.2,456.1 526.6,452.5" fill="#950c29" stroke="#950c29"/>
<polygon points="537.7,445.5 530.2,450.3 530.2,456.1 537.7,451.3" fill="#bb0f34" stroke="#bb0f34"/>
<polygon points="534.0,441.8 537.7,445.5 530.2,450.3 526.6,446.7" fill="#d0113a" stroke="#d0113a"/>
<polygon points="548.0,466.4 552.9,471.3 552.9,477.1 548.0,472.2" fill="#950c29" stroke="#950c29"/>
<polygon points="554.4,462.2 559.3,467.1 552.9,471.3 548.0,466.4" fill="#d0113a" stroke="#d0113a"/>
<polygon points="587.1,461.2 578.1,467.1 578.1,472.9 587.1,467.0" fill="#5f5c64" stroke="#5f5c64"/>
<polygon points="579.8,453.9 587.1,461.2 578.1,467.1 570.7,459.8" fill="#6a6770" stroke="#6a6770"/>
<polygon points="552.9,471.3 560.3,478.6 560.3,484.4 552.9,477.1" fill="#950c29" stroke="#950c29"/>
<polygon points="578.1,467.1 560.3,478.6 560.3,484.4 578.1,472.9" fill="#bb0f34" stroke="#bb0f34"/>
<polygon points="570.7,459.8 578.1,467.1 560.3,478.6 552.9,471.3" fill="#d0113a" stroke="#d0113a"/>
<polygon points="518.4,438.5 554.0,415.5 594.8,456.3 560.3,478.6 560.3,484.4 548.0,472.2 548.0,466.4 554.4,462.2 559.3,467.1 579.8,453.9 554.5,428.6 534.0,441.8 537.7,445.5 530.2,450.3 530.2,456.1 518.4,444.3" fill="url(#ds8)" opacity="0.6" stroke="none"/>
<polygon points="628.0,420.7 669.4,460.4 669.4,466.2 628.0,426.5" fill="#4c4a50" stroke="#4c4a50"/>
<polygon points="677.0,455.2 669.4,460.4 669.4,466.2 677.0,461.0" fill="#5f5c64" stroke="#5f5c64"/>
<polygon points="635.6,415.5 677.0,455.2 669.4,460.4 628.0,420.7" fill="#6a6770" stroke="#6a6770"/>
<polygon points="600.4,439.5 608.7,447.4 608.7,453.2 600.4,445.3" fill="#4c4a50" stroke="#4c4a50"/>
<polygon points="636.3,428.6 608.7,447.4 608.7,453.2 636.3,434.4" fill="#5f5c64" stroke="#5f5c64"/>
<polygon points="628.0,420.7 636.3,428.6 608.7,447.4 600.4,439.5" fill="#6a6770" stroke="#6a6770"/>
<polygon points="608.7,447.4 612.4,451.0 612.4,456.8 608.7,453.2" fill="#4c4a50" stroke="#4c4a50"/>
<polygon points="619.8,446.0 612.4,451.0 612.4,456.8 619.8,451.8" fill="#5f5c64" stroke="#5f5c64"/>
<polygon points="616.1,442.4 619.8,446.0 612.4,451.0 608.7,447.4" fill="#6a6770" stroke="#6a6770"/>
<polygon points="630.4,466.6 635.4,471.3 635.4,477.1 630.4,472.4" fill="#4c4a50" stroke="#4c4a50"/>
<polygon points="636.8,462.2 641.7,467.0 635.4,471.3 630.4,466.6" fill="#6a6770" stroke="#6a6770"/>
<polygon points="635.4,471.3 642.9,478.5 642.9,484.3 635.4,477.1" fill="#4c4a50" stroke="#4c4a50"/>
<polygon points="669.4,460.4 642.9,478.5 642.9,484.3 669.4,466.2" fill="#5f5c64" stroke="#5f5c64"/>
<polygon points="662.0,453.2 669.4,460.4 642.9,478.5 635.4,471.3" fill="#6a6770" stroke="#6a6770"/>
<polygon points="600.4,439.5 635.6,415.5 677.0,455.2 642.9,478.5 642.9,484.3 630.4,472.4 630.4,466.6 636.8,462.2 641.7,467.0 662.0,453.2 636.3,428.6 616.1,442.4 619.8,446.0 612.4,451.0 612.4,456.8 600.4,445.3" fill="url(#ds9)" opacity="0.6" stroke="none"/>
<polygon points="709.6,176.1 729.7,193.4 729.7,199.2 709.6,181.9" fill="#4c4a50" stroke="#4c4a50"/>
<polygon points="717.1,171.3 737.2,188.6 729.7,193.4 709.6,176.1" fill="#6a6770" stroke="#6a6770"/>
<polygon points="729.7,193.4 752.0,212.5 752.0,218.3 729.7,199.2" fill="#950c29" stroke="#950c29"/>
<polygon points="759.5,207.7 752.0,212.5 752.0,218.3 759.5,213.5" fill="#bb0f34" stroke="#bb0f34"/>
<polygon points="737.2,188.6 759.5,207.7 752.0,212.5 729.7,193.4" fill="#d0113a" stroke="#d0113a"/>
<polygon points="682.2,193.7 690.7,201.0 690.7,206.8 682.2,199.5" fill="#4c4a50" stroke="#4c4a50"/>
<polygon points="718.1,183.4 690.7,201.0 690.7,206.8 718.1,189.2" fill="#5f5c64" stroke="#5f5c64"/>
<polygon points="709.6,176.1 718.1,183.4 690.7,201.0 682.2,193.7" fill="#6a6770" stroke="#6a6770"/>
<polygon points="690.7,201.0 694.5,204.3 694.5,210.1 690.7,206.8" fill="#4c4a50" stroke="#4c4a50"/>
<polygon points="701.8,199.6 694.5,204.3 694.5,210.1 701.8,205.4" fill="#5f5c64" stroke="#5f5c64"/>
<polygon points="698.0,196.3 701.8,199.6 694.5,204.3 690.7,201.0" fill="#6a6770" stroke="#6a6770"/>
<polygon points="701.5,183.9 708.5,189.9 708.5,200.0 701.5,194.0" fill="#0000c0" stroke="#0000c0"/>
<polygon points="715.1,185.7 708.5,189.9 708.5,200.0 715.1,195.8" fill="#0000d8" stroke="#0000d8"/>
<polygon points="708.1,179.7 715.1,185.7 708.5,189.9 701.5,183.9" fill="#0000f0" stroke="#0000f0"/>
<polygon points="712.9,218.5 718.0,222.9 718.0,228.7 712.9,224.3" fill="#950c29" stroke="#950c29"/>
<polygon points="719.2,214.5 724.3,218.8 718.0,222.9 712.9,218.5" fill="#d0113a" stroke="#d0113a"/>
<polygon points="718.0,222.9 725.6,229.4 725.6,235.2 718.0,228.7" fill="#950c29" stroke="#950c29"/>
<polygon points="752.0,212.5 725.6,229.4 725.6,235.2 752.0,218.3" fill="#bb0f34" stroke="#bb0f34"/>
<polygon points="744.4,206.0 752.0,212.5 725.6,229.4 718.0,222.9" fill="#d0113a" stroke="#d0113a"/>
<polygon points="682.2,193.7 717.1,171.3 759.5,207.7 725.6,229.4 725.6,235.2 712.9,224.3 712.9,218.5 719.2,214.5 724.3,218.8 744.4,206.0 718.1,183.4 698.0,196.3 701.8,199.6 694.5,204.3 694.5,210.1 682.2,199.5" fill="url(#ds1)" opacity="0.6" stroke="none"/>
</g></svg>
</div></body></html>
